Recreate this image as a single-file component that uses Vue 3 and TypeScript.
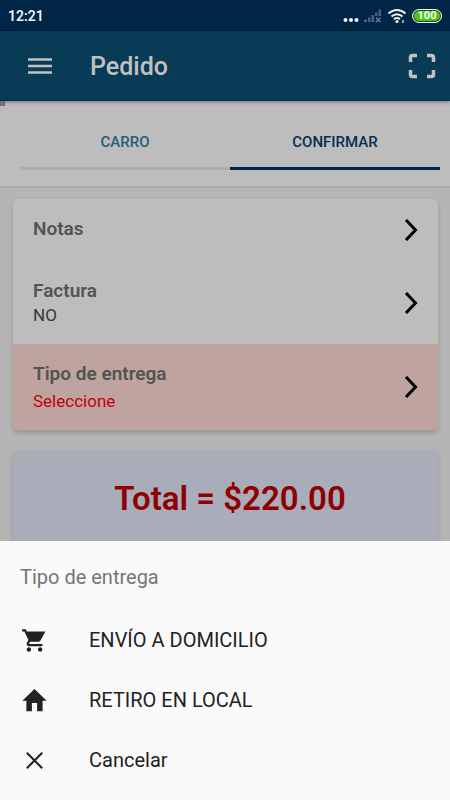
<script setup lang="ts">
import { ref } from 'vue'

interface OrderRow {
  title: string
  value: string
  required?: boolean
}

type DeliveryIcon = 'cart' | 'home' | 'close'

const tabs: string[] = ['CARRO', 'CONFIRMAR']
const activeTab = ref<string>('CONFIRMAR')

const rows: OrderRow[] = [
  { title: 'Notas', value: '' },
  { title: 'Factura', value: 'NO' },
  { title: 'Tipo de entrega', value: 'Seleccione', required: true },
]

const actions: { icon: DeliveryIcon; label: string }[] = [
  { icon: 'cart', label: 'ENVÍO A DOMICILIO' },
  { icon: 'home', label: 'RETIRO EN LOCAL' },
  { icon: 'close', label: 'Cancelar' },
]

const iconPaths: Record<DeliveryIcon, string> = {
  cart: 'M7 18c-1.1 0-1.99.9-1.99 2S5.9 22 7 22s2-.9 2-2-.9-2-2-2zM1 2v2h2l3.6 7.59-1.35 2.45c-.16.28-.25.61-.25.96 0 1.1.9 2 2 2h12v-2H7.42c-.14 0-.25-.11-.25-.25l.03-.12.9-1.63h7.45c.75 0 1.41-.41 1.75-1.03L21.7 4H5.21l-.94-2H1zm16 16c-1.1 0-1.99.9-1.99 2s.89 2 1.99 2 2-.9 2-2-.9-2-2-2z',
  home: 'M4.8 21.5v-9.2H1.2L12 1.700l10.800 10.600h-3.600v9.200h-4.900v-7.200H9.700v7.200z',
  close: 'M19.500 5.800 18.200 4.500 12 10.700 5.800 4.500 4.500 5.800l6.200 6.200-6.200 6.200 1.300 1.300 6.200-6.200 6.200 6.200 1.300-1.300-6.200-6.200z',
}
</script>

<template>
  <div class="screen">
    <div class="status">
      <span class="clock">12:21</span>
      <div class="indicators">
        <svg class="dots" viewBox="0 0 16 16" aria-hidden="true">
          <circle cx="2.5" cy="12" r="2" /><circle cx="8" cy="12" r="2" /><circle cx="13.5" cy="12" r="2" />
        </svg>
        <svg class="signal" viewBox="0 0 18 16" aria-hidden="true">
          <path d="M0 14v-2.500h3V14zM4 14V9.500h2.500V14zM7.500 14V7H10v7zM11 8V4.500h2.500V8zM14.500 8V1.500H17V8z" />
          <path class="cross" d="m12 9.500 4.500 4.500m0-4.500L12 14" />
        </svg>
        <svg class="wifi" viewBox="0 0 20 16" aria-hidden="true">
          <path d="M1.500 5.500Q10-1.500 18.500 5.500M4.500 8.500q5.500-4.500 11 0M7 11.200q3-2.400 6 0" />
          <circle cx="10" cy="13.500" r="1.500" />
          <path class="faint" d="M16 12v3" />
        </svg>
        <span class="battery">100</span>
      </div>
    </div>

    <header class="toolbar">
      <button class="icon-button" type="button" aria-label="Menú">
        <svg class="menu-icon" viewBox="0 0 24 18" aria-hidden="true">
          <path d="M0 2.500h24M0 9h24M0 15.500h24" />
        </svg>
      </button>
      <h1>Pedido</h1>
      <button class="icon-button" type="button" aria-label="Escanear">
        <svg class="scan-icon" viewBox="0 0 28 26" aria-hidden="true">
          <path d="M2.500 9V4.500q0-2 2-2H9M19 2.500h4.500q2 0 2 2V9M25.500 17v4.500q0 2-2 2H19M9 23.500H4.500q-2 0-2-2V17" />
        </svg>
      </button>
    </header>

    <nav class="tabs">
      <button
        v-for="tab in tabs"
        :key="tab"
        class="tab"
        :class="{ active: tab === activeTab }"
        type="button"
        @click="activeTab = tab"
      >
        {{ tab }}
      </button>
    </nav>

    <main class="content">
      <section class="card">
        <button
          v-for="row in rows"
          :key="row.title"
          class="row"
          :class="{ required: row.required }"
          type="button"
        >
          <span class="row-text">
            <span class="row-title">{{ row.title }}</span>
            <span v-if="row.value" class="row-value">{{ row.value }}</span>
          </span>
          <svg class="chevron" viewBox="0 0 14 22" aria-hidden="true">
            <path d="m2 1 9.500 10L2 21" />
          </svg>
        </button>
      </section>
      <section class="card total">Total = $220.00</section>
    </main>

    <div class="sheet" role="dialog" aria-labelledby="sheet-title">
      <h2 id="sheet-title">Tipo de entrega</h2>
      <button v-for="action in actions" :key="action.label" class="action" type="button">
        <svg viewBox="0 0 24 24" aria-hidden="true"><path :d="iconPaths[action.icon]" /></svg>
        {{ action.label }}
      </button>
    </div>
  </div>
</template>

<style>
body {
  background: #b5b5b5;
}
</style>

<style scoped>
.screen {
  display: flex;
  flex-direction: column;
  height: 100vh;
  overflow: hidden;
  background: #b5b5b5;
  font-family: Roboto, sans-serif;
}

button {
  margin: 0;
  padding: 0;
  border: 0;
  background: none;
  color: inherit;
  font: inherit;
  cursor: pointer;
}

h1,
h2 {
  margin: 0;
}

.status {
  display: flex;
  flex: none;
  align-items: center;
  justify-content: space-between;
  height: 31px;
  padding: 0 8px;
  background: #002546;
  color: #f1f5f8;
}

.clock {
  font-size: 14px;
  font-weight: 600;
}

.indicators {
  display: flex;
  align-items: center;
  gap: 5px;
}

.indicators svg {
  height: 16px;
}

.dots {
  width: 16px;
  fill: #f1f5f8;
}

.signal {
  width: 18px;
  fill: #49617a;
}

.cross {
  fill: none;
  stroke: #627890;
  stroke-width: 1.5;
}

.wifi {
  width: 20px;
  fill: #f1f5f8;
}

.wifi path {
  fill: none;
  stroke: #f1f5f8;
  stroke-width: 2;
}

.wifi .faint {
  stroke: #8fa3b5;
}

.battery {
  box-sizing: border-box;
  width: 30px;
  height: 14px;
  border: 1px solid #f1f5f8;
  border-radius: 7px;
  background: #4fc30f;
  box-shadow: inset 0 0 0 1px #174b32;
  color: #fff;
  font-size: 11px;
  font-weight: 700;
  line-height: 12px;
  text-align: center;
}

.toolbar {
  position: relative;
  display: flex;
  flex: none;
  align-items: center;
  height: 70px;
  padding: 0 14px 0 28px;
  background: #083b56;
  box-shadow: inset 0 -1px #003052, 0 1px 4px rgba(0, 0, 0, 0.4);
  color: #c1c1c1;
}

.toolbar::after {
  position: absolute;
  top: 100%;
  left: 0;
  width: 5px;
  height: 5px;
  background: #707070;
  content: '';
}

.toolbar h1 {
  flex: 1;
  padding-left: 38px;
  font-size: 25px;
  font-weight: 500;
}

.icon-button {
  display: flex;
}

.icon-button svg {
  fill: none;
  stroke: currentColor;
}

.menu-icon {
  width: 24px;
  height: 18px;
  stroke-width: 2.5;
}

.scan-icon {
  width: 28px;
  height: 26px;
  stroke-width: 3.5;
}

.tabs {
  display: flex;
  flex: none;
  padding: 16px 10px 16px 20px;
  border-bottom: 2px solid #a9a9a9;
  background: #bdbdbd;
}

.tab {
  flex: 1;
  height: 53px;
  border-bottom: 3px solid #adadad;
  color: #255c78;
  font-size: 15px;
  font-weight: 500;
}

.tab.active {
  border-color: #00244f;
  color: #062d54;
}

.content {
  display: flex;
  flex: 1;
  flex-direction: column;
  gap: 20px;
  min-height: 0;
  padding: 11px 12px 0 13px;
}

.card {
  flex: none;
  overflow: hidden;
  border-radius: 5px;
  background: #bdbdbd;
  box-shadow: 0 3px 5px rgba(0, 0, 0, 0.18);
}

.row {
  display: flex;
  align-items: center;
  justify-content: space-between;
  width: 100%;
  min-height: 62px;
  padding: 17px 20px;
  text-align: left;
}

.row-text {
  display: flex;
  flex-direction: column;
  align-self: flex-start;
}

.row-title {
  color: #535353;
  font-size: 19px;
  font-weight: 600;
  line-height: 25px;
}

.row-value {
  color: #363636;
  font-size: 17px;
  line-height: 24px;
}

.required {
  background: #bea39e;
}

.required .row-text {
  gap: 3px;
}

.required .row-value {
  color: #c50008;
}

.chevron {
  width: 14px;
  height: 22px;
  fill: none;
  stroke: #000;
  stroke-width: 3;
}

.total {
  padding: 28px 20px 60px 29px;
  background: #a9adb9;
  color: #8e0002;
  font-size: 33px;
  font-weight: 600;
  line-height: 42px;
  text-align: center;
}

.sheet {
  position: fixed;
  right: 0;
  bottom: 0;
  left: 0;
  display: flex;
  flex-direction: column;
  padding-bottom: 10px;
  background: #fafafa;
  color: #222;
  font-size: 20px;
}

.sheet h2 {
  padding: 24px 20px 21px;
  color: #757575;
  font-size: 20px;
  font-weight: 400;
  line-height: 24px;
}

.action {
  display: flex;
  align-items: center;
  gap: 41px;
  height: 60px;
  padding: 0 21px;
  text-align: left;
}

.action svg {
  width: 27px;
  height: 27px;
  fill: currentColor;
}
</style>
